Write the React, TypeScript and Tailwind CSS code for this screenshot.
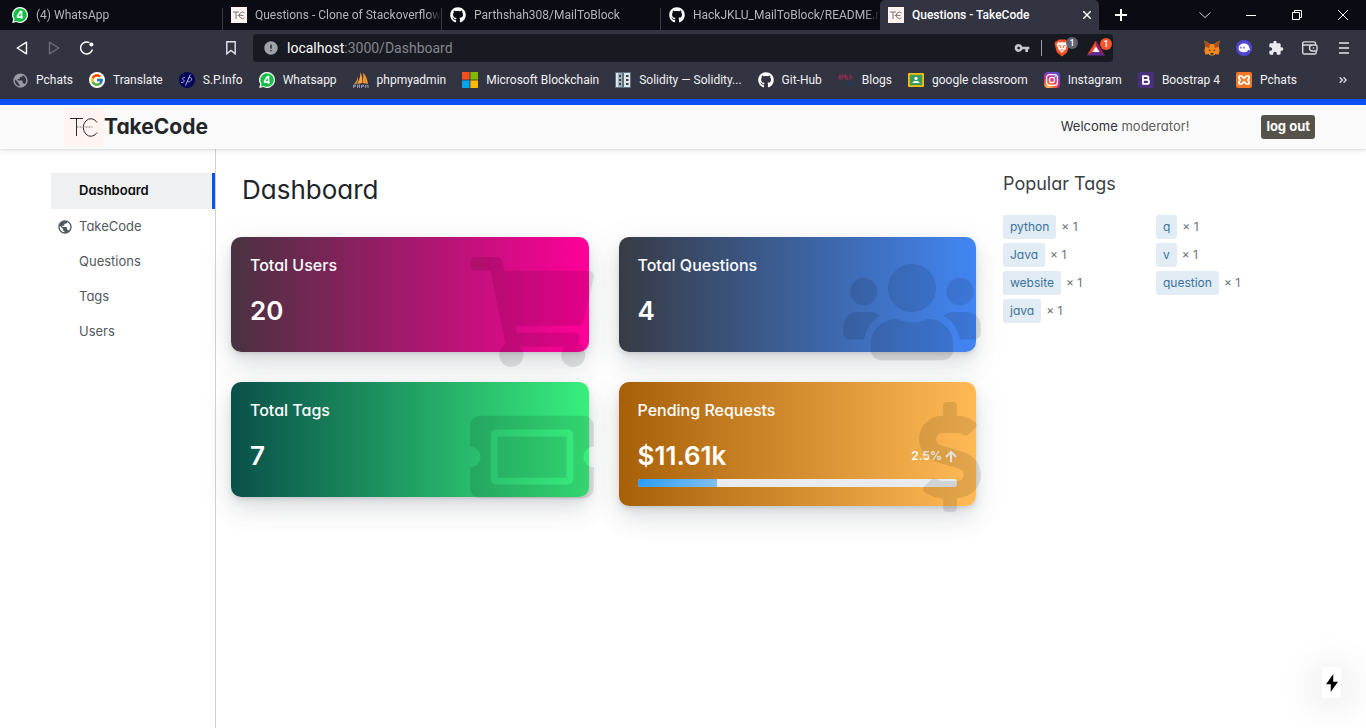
import type { ReactNode } from "react";
import {
  FaArrowUp,
  FaDollarSign,
  FaGithub,
  FaShoppingCart,
  FaTicketAlt,
  FaUsers,
} from "react-icons/fa";
import { FcGoogle } from "react-icons/fc";
import { MdError, MdExtension, MdPublic, MdVpnKey } from "react-icons/md";

/* ---------- Small drawings ---------- */

const TcIcon = () => (
  <span className="grid size-4 shrink-0 place-items-center bg-[#fff4f2]">
    <svg viewBox="0 0 16 16" className="size-4" fill="none" stroke="#777" strokeWidth="1">
      <path d="M2 5h6M5 5v7M13.600 6A3.100 3.300 0 1 0 13.600 10.700M6.500 8.400h6" />
    </svg>
  </span>
);

const WhatsAppIcon = () => (
  <svg viewBox="0 0 16 16" className="size-4 shrink-0">
    <path d="M8 0a8 8 0 1 1-3.700 15.100L.2 16l1-3.900A8 8 0 0 1 8 0z" fill="#fff" />
    <path d="M8 1.200a6.800 6.800 0 1 1-3.400 12.700L1.900 14.500l.7-2.600A6.800 6.800 0 0 1 8 1.200z" fill="#12c143" />
    <path d="M9.500 12V4.600H8.400L5.600 9.100v1h5.200" fill="none" stroke="#fff" strokeWidth="1.600" />
  </svg>
);

const SpIcon = () => (
  <svg viewBox="0 0 16 16" className="size-4 shrink-0">
    <circle cx="8" cy="8" r="8" fill="#04065a" />
    <path
      d="M5.900 5.500C3.500 5 3 7 4.500 8s.5 3-2.500 2.400M6.500 13.500 11.300 2.500M9 6.500c2-2 5-.5 3 2S8.300 9.500 8.500 8.500"
      fill="none"
      stroke="#b9c9f5"
      strokeWidth=".9"
    />
  </svg>
);

const SailIcon = () => (
  <svg viewBox="0 0 16 16" className="size-4 shrink-0">
    <path d="M7.300.3C7.500 4.500 6.500 8 4 12l5-1C9.600 7 9.200 3.500 7.300.3z" fill="#f9a13a" />
    <path d="M10 .8c.4 3.500.2 6.500-.5 10.200l5.500 1C14.500 7.500 13 3.500 10 .8z" fill="#f0922b" />
    <path d="M4.800 4C4.500 7.500 3 10 .8 12.400l2.700-.4C5.300 9.500 5.300 7 4.800 4z" fill="#c98a4a" />
    <path d="M.5 16V13h2v1.500h-2M4.500 12.500V16M4.500 14.200h2V12.500V16M8.500 16v-3h2v1.500h-2M12.500 16v-3l1.200 1.500 1.300-1.500v3" fill="none" stroke="#9498b8" strokeWidth=".9" />
  </svg>
);

const MicrosoftIcon = () => (
  <svg viewBox="0 0 16 16" className="size-4 shrink-0">
    <path d="M0 0h7.600v7.600H0z" fill="#f25022" />
    <path d="M8.400 0H16v7.600H8.400z" fill="#7fba00" />
    <path d="M0 8.400h7.600V16H0z" fill="#00a4ef" />
    <path d="M8.400 8.400H16V16H8.400z" fill="#ffb900" />
  </svg>
);

const SolidityIcon = () => (
  <svg viewBox="0 0 16 16" className="size-4 shrink-0">
    <path d="M0 0h16v16H0z" fill="#5d7282" />
    <path d="M1 1h2.500v14H1zM9 1h6v14H9z" fill="#dfe5e8" />
    <path d="M3.500 1H7v14H3.500z" fill="#a4b1ba" />
    <path d="M4 3h2v2H4zM4 7h2v2H4zM4 11h2v2H4zM11 3h2.500v2H11zM11 7h2.500v2H11zM11 11h2.500v2H11z" fill="#33454f" />
  </svg>
);

const BlogsIcon = () => (
  <svg viewBox="0 0 16 16" className="size-4 shrink-0" fill="none" strokeWidth="1.200">
    <path d="M.5 7.500 2 3l1.300 4.500M1 6h2M4.500 7.500V3L6 5l1.300-2v4.500M8.800 3v4.500h1.700M8.800 5h1.500M12 7.500V3c2.300.5 2.300 4 0 4.500" stroke="#84304f" />
    <path d="M9 13.500V10.500l1 1.500 1-1.500v3M12.500 10.500h2.500v3h-2.500z" stroke="#26395f" />
  </svg>
);

const ClassroomIcon = () => (
  <svg viewBox="0 0 16 16" className="size-4 shrink-0">
    <rect y="1" width="16" height="14" rx="1" fill="#f6bc13" />
    <path d="M1.800 2.800h12.400v10.400H1.800z" fill="#3b9a5c" />
    <circle cx="8" cy="6.400" r="1.600" fill="#fff" />
    <path d="M4.600 11c0-2.600 6.800-2.600 6.800 0z" fill="#fff" />
  </svg>
);

const InstagramIcon = () => (
  <svg viewBox="0 0 16 16" className="size-4 shrink-0">
    <defs>
      <radialGradient id="insta" cx=".25" cy="1.050" r="1.100">
        <stop offset="0" stopColor="#fed65b" />
        <stop offset=".35" stopColor="#f8653c" />
        <stop offset=".65" stopColor="#d02a8c" />
        <stop offset="1" stopColor="#5a4fd6" />
      </radialGradient>
    </defs>
    <rect width="16" height="16" rx="4" fill="url(#insta)" />
    <rect x="2.600" y="2.600" width="10.800" height="10.800" rx="3" fill="none" stroke="#fff" strokeWidth="1.200" />
    <circle cx="8" cy="8" r="2.600" fill="none" stroke="#fff" strokeWidth="1.200" />
    <circle cx="11.200" cy="4.800" r=".7" fill="#fff" />
  </svg>
);

const BootstrapIcon = () => (
  <svg viewBox="0 0 16 16" className="size-4 shrink-0">
    <rect width="16" height="16" rx="2" fill="#4a2f7a" />
    <path
      d="M5 4.200h3.600a1.800 1.800 0 0 1 0 3.700H5h4a2 2 0 0 1 0 4H5z"
      fill="none"
      stroke="#fff"
      strokeWidth="1.800"
    />
  </svg>
);

const XamppIcon = () => (
  <svg viewBox="0 0 16 16" className="size-4 shrink-0">
    <rect width="16" height="16" rx="2" fill="#f37623" />
    <path
      d="M3 4h2.500L8 6.300 10.500 4H13v2.800L11.500 8 13 9.300V12H10.500L8 9.700 5.500 12H3V9.300L4.500 8 3 6.800z"
      fill="none"
      stroke="#fff"
      strokeWidth="1.700"
      strokeLinejoin="round"
    />
  </svg>
);

const GlobeIcon = () => (
  <span className="grid size-4 shrink-0 place-items-center">
    <MdPublic className="size-[17px] text-[#9a9ca4]" />
  </span>
);

const BraveIcon = () => (
  <svg viewBox="0 0 16 18" className="h-[18px] w-4">
    <path d="M4.500.5h7l1.500 1.700 1.500 0L15.500 5l-.6 1.700-1.700 6.600L8 17.500 2.800 13.300 1.100 6.700.5 5l1-2.800 1.500 0z" fill="#fb542b" />
    <path d="M4 3.200 6 3.500l2-.4 2 .4 2-.3 1.500 2.500-1.800 3.100.3 1.300-2.500 1.900L8 14 6.500 12 4 10.100l.3-1.300-1.800-3.100z" fill="#fff" />
    <path d="M4.500 6.300 7 7.300 6.500 9M11.500 6.300 9 7.300 9.500 9M6.800 10.600 8 11.300l1.200-.7" fill="none" stroke="#fb542b" strokeWidth="1" />
  </svg>
);

const BatIcon = () => (
  <svg viewBox="0 0 18 16" className="h-4 w-[18px]">
    <path d="M9 .5 0 15.500 5.600 12 9 6.500z" fill="#ff4724" />
    <path d="M9 .5 18 15.500 12.400 12 9 6.500z" fill="#9e1f63" />
    <path d="M0 15.500h18L12.400 12H5.600z" fill="#662d91" />
    <path d="M9 6.300 12.600 12H5.400z" fill="#fff" />
  </svg>
);

const FoxIcon = () => (
  <svg viewBox="0 0 16 16" className="size-4">
    <path d="M.5.5 6 4h4l5.500-3.500-.7 6.300.9 4.200-1.200 3.800-3.300-.8L9.500 15.500h-3L4.800 14l-3.300.8L.3 11l.9-4.200z" fill="#f6851b" />
    <path d="M.5.5 6 4l-.7 4-4.100-1.200zM15.500.5 10 4l.7 4 4.100-1.200z" fill="#a8511c" />
    <path d="M5.300 9.500 7 10.400l-2.300.6zM10.700 9.500 9 10.400l2.300.6z" fill="#2b3a4c" />
    <path d="M6.500 13h3l.3 1.600H6.200z" fill="#3a2a22" />
    <path d="M4.800 14 6.200 13v1.700zM11.200 14 9.800 13v1.700z" fill="#d8c4b3" />
  </svg>
);

const GhostIcon = () => (
  <svg viewBox="0 0 16 16" className="size-4">
    <circle cx="8" cy="8" r="8" fill="#5145d6" />
    <path d="M2.600 8.500C2.600 5 5.200 3.400 8 3.400s5.400 1.900 5.500 5c.8.800.9 1.700.4 1.900-.5.200-1-.2-1.400-.6-.9 1.700-2.300 2.500-4.500 2.500-3 0-5.400-1.200-5.400-3.700z" fill="#fff" />
    <ellipse cx="5" cy="7.700" rx=".7" ry="1.100" fill="#5145d6" />
    <ellipse cx="8" cy="7.700" rx=".7" ry="1.100" fill="#5145d6" />
  </svg>
);

const WalletIcon = () => (
  <svg viewBox="0 0 16 14" className="h-3.5 w-4" fill="none" stroke="#d9dae0" strokeWidth="1.400">
    <path d="M13.500 4V2.500a1.600 1.600 0 0 0-1.600-1.600H2.300A1.600 1.600 0 0 0 .7 2.500v8.900A1.600 1.600 0 0 0 2.300 13h10.300a1.600 1.600 0 0 0 1.600-1.600V10M1 4h12.700a1.300 1.300 0 0 1 1.300 1.300v3.400A1.300 1.300 0 0 1 13.700 10H10.500a3 3 0 0 1 0-6" />
    <path d="M10.800 7h1.400" />
  </svg>
);

/* ---------- Browser frame ---------- */

type Tab = { title: string; icon: ReactNode; active?: boolean; last?: boolean };

const github = <FaGithub className="size-4 shrink-0 text-white" />;

const tabs: Tab[] = [
  { title: "(4) WhatsApp", icon: <WhatsAppIcon /> },
  { title: "Questions - Clone of Stackoverflow", icon: <TcIcon /> },
  { title: "Parthshah308/MailToBlock", icon: github },
  { title: "HackJKLU_MailToBlock/README.m", icon: github, last: true },
  { title: "Questions - TakeCode", icon: <TcIcon />, active: true },
];

function TabStrip() {
  return (
    <div className="flex h-[30px] bg-[#0b0b14] pl-1">
      <div className="flex min-w-0 grow">
        {tabs.map((tab) =>
          tab.active ? (
            <div
              key={tab.title}
              className="flex w-[219px] items-center gap-2 rounded-t-[5px] bg-[#323442] px-2 text-white"
            >
              {tab.icon}
              <span className="grow truncate font-medium">{tab.title}</span>
              <button type="button" aria-label="Close tab">
                <svg viewBox="0 0 8 8" className="size-2" stroke="#fff" strokeWidth="1.500">
                  <path d="M0 0 8 8M8 0 0 8" />
                </svg>
              </button>
            </div>
          ) : (
            <div key={tab.title} className="flex w-[219px] items-center text-[#b4b5ba]">
              <div className="flex min-w-0 grow items-center gap-2 pl-2">
                {tab.icon}
                <span className="grow overflow-hidden whitespace-nowrap [mask-image:linear-gradient(to_right,#000_92%,transparent)]">
                  {tab.title}
                </span>
              </div>
              {!tab.last && <span className="mt-2 h-[22px] w-px bg-[#3b3b44]" />}
            </div>
          ),
        )}
        <button type="button" aria-label="New tab" className="grid w-11 place-items-center">
          <svg viewBox="0 0 12 12" className="size-3" stroke="#fff" strokeWidth="2">
            <path d="M6 0v12M0 6h12" />
          </svg>
        </button>
      </div>
      <div className="flex">
        <button type="button" aria-label="Search tabs" className="grid w-[46px] place-items-center">
          <svg viewBox="0 0 12 6" className="h-1.5 w-3" fill="none" stroke="#d5d5d8">
            <path d="M.5.5 6 5.500 11.500.5" />
          </svg>
        </button>
        <button type="button" aria-label="Minimize" className="grid w-[46px] place-items-center">
          <span className="h-px w-2.5 bg-white" />
        </button>
        <button type="button" aria-label="Restore" className="grid w-[46px] place-items-center">
          <svg viewBox="0 0 10 10" className="size-2.5" fill="none" stroke="#fff">
            <path d="M.5 2.500h7v7h-7zM2.500 2V.5h7v7H8" />
          </svg>
        </button>
        <button type="button" aria-label="Close" className="grid w-[46px] place-items-center">
          <svg viewBox="0 0 10 10" className="size-2.5" stroke="#fff">
            <path d="M0 0 10 10M10 0 0 10" />
          </svg>
        </button>
      </div>
    </div>
  );
}

function Toolbar() {
  return (
    <div className="flex h-9 items-center pr-3 pl-4">
      <div className="flex w-[237px] items-center gap-5 pr-[17px]">
        <button type="button" aria-label="Back">
          <svg viewBox="0 0 12 14" className="h-3.5 w-3" fill="none" stroke="#fff" strokeWidth="1.400" strokeLinejoin="round">
            <path d="M10.500 1.200v11.600L1.200 7z" />
          </svg>
        </button>
        <button type="button" aria-label="Forward">
          <svg viewBox="0 0 12 14" className="h-3.5 w-3" fill="none" stroke="#6a6c78" strokeWidth="1.400" strokeLinejoin="round">
            <path d="M1.500 1.200v11.600L10.800 7z" />
          </svg>
        </button>
        <button type="button" aria-label="Reload">
          <svg viewBox="0 0 14 14" className="size-3.5" fill="none" stroke="#fff" strokeWidth="1.500">
            <path d="M9.500 1.700A6 6 0 1 0 12.400 8.500" />
            <circle cx="11.400" cy="3.400" r="2" fill="#fff" stroke="none" />
          </svg>
        </button>
        <button type="button" aria-label="Bookmark" className="ml-auto">
          <svg viewBox="0 0 10 14" className="h-3.5 w-2.5" fill="none" stroke="#e4e5ea" strokeWidth="1.400">
            <path d="M.8.8h8.400v12L5 9.500.8 12.800z" />
          </svg>
        </button>
      </div>
      <div className="flex h-7 grow items-center rounded bg-[#171a21] pr-0.5 pl-2.5">
        <MdError className="size-4 text-[#a0a2aa]" />
        <div role="textbox" aria-label="Address" tabIndex={0} className="grow pl-2 text-sm text-[#85878e]">
          <span className="text-white">localhost</span>:3000/Dashboard
        </div>
        <MdVpnKey className="size-4 text-[#c5c6cc]" />
        <span className="mr-3 ml-[11px] h-4 w-px bg-[#9a9ca4]" />
        <span className="relative mr-[17px]">
          <BraveIcon />
          <span className="absolute -top-0.5 left-3 grid size-3 place-items-center rounded-full bg-[#5f6270] text-[9px] leading-3 font-medium text-white">
            1
          </span>
        </span>
        <span className="relative mr-1.5">
          <BatIcon />
          <span className="absolute -top-0.5 left-[13px] grid size-3 place-items-center rounded-full bg-[#fb542b] text-[9px] leading-3 font-medium text-white">
            1
          </span>
        </span>
      </div>
      <div className="ml-[91px] flex items-center gap-4">
        <FoxIcon />
        <GhostIcon />
        <MdExtension className="size-4 text-[#e9eaee]" />
        <span className="pl-0.5">
          <WalletIcon />
        </span>
        <button type="button" aria-label="Menu" className="flex w-5 flex-col items-center gap-[3px]">
          <span className="h-[2px] w-2.5 bg-[#b9bac2]" />
          <span className="h-[2px] w-2.5 bg-[#b9bac2]" />
          <span className="h-[2px] w-2.5 bg-[#b9bac2]" />
        </button>
      </div>
    </div>
  );
}

const bookmarks: { label: string; icon: ReactNode }[] = [
  { label: "Pchats", icon: <GlobeIcon /> },
  {
    label: "Translate",
    icon: (
      <span className="grid size-4 shrink-0 place-items-center rounded-full bg-white">
        <FcGoogle className="size-3.5" />
      </span>
    ),
  },
  { label: "S.P.Info", icon: <SpIcon /> },
  { label: "Whatsapp", icon: <WhatsAppIcon /> },
  { label: "phpmyadmin", icon: <SailIcon /> },
  { label: "Microsoft Blockchain", icon: <MicrosoftIcon /> },
  { label: "Solidity — Solidity...", icon: <SolidityIcon /> },
  { label: "Git-Hub", icon: github },
  { label: "Blogs", icon: <BlogsIcon /> },
  { label: "google classroom", icon: <ClassroomIcon /> },
  { label: "Instagram", icon: <InstagramIcon /> },
  { label: "Boostrap 4", icon: <BootstrapIcon /> },
  { label: "Pchats", icon: <XamppIcon /> },
];

function BookmarksBar() {
  return (
    <nav aria-label="Bookmarks" className="flex h-[33px] items-center pb-1.5 pl-3 text-[#f1f1f4]">
      <ul className="flex grow items-center gap-4">
        {bookmarks.map((item, i) => (
          <li key={i}>
            <a href="#" className="flex items-center gap-2 whitespace-nowrap">
              {item.icon}
              {item.label}
            </a>
          </li>
        ))}
      </ul>
      <button type="button" aria-label="More bookmarks" className="mr-[19px]">
        <svg viewBox="0 0 8 6" className="h-1.5 w-2" fill="none" stroke="#e4e5ea" strokeWidth="1.300">
          <path d="M.7.3 3.400 3 .7 5.700M4.500.3 7.200 3 4.500 5.700" />
        </svg>
      </button>
    </nav>
  );
}

/* ---------- Site ---------- */

function SiteHeader() {
  return (
    <header className="z-10 border-t-[6px] border-[#0a52f0] bg-[#fafafa] shadow-[0_1px_2px_rgba(0,0,0,0.1),0_2px_8px_rgba(0,0,0,0.07)]">
      <div className="mx-auto flex h-11 max-w-[1264px] items-center justify-between">
        <a href="#" className="flex items-center pl-[13px] text-[21px] font-bold text-[#232629]">
          <svg viewBox="0 0 40 40" className="size-10 bg-[#fff4f2]" fill="none" stroke="#2b2b2b" strokeWidth="1">
            <path d="M6 11.500h13M12.500 11.500V29M33 15.500a7.500 8.800 0 1 0 0 10" />
            <path d="M12.500 20h16" strokeDasharray="2 1" stroke="#777" />
          </svg>
          TakeCode
        </a>
        <div className="flex items-center gap-[72px]">
          <p className="text-[13px] text-[#2f3337]">
            Welcome <span className="text-[#5e5e5a]">moderator!</span>
          </p>
          <button type="button" className="h-6 rounded-[3px] bg-[#54524a] px-[5px] text-[13px] font-bold text-white">
            log out
          </button>
        </div>
      </div>
    </header>
  );
}

const links = ["TakeCode", "Questions", "Tags", "Users"];

function Sidebar() {
  return (
    <nav aria-label="Main" className="w-[165px] shrink-0 border-r border-[#d0d3d6] pt-6 text-[13px] text-[#525960]">
      <a
        href="#"
        aria-current="page"
        className="flex h-9 items-center border-r-[3px] border-[#0a52f0] bg-[#eff0f1] pl-7 font-semibold text-[#0c0d0e]"
      >
        Dashboard
      </a>
      {links.map((label, i) => (
        <a key={label} href="#" className="flex h-[35px] items-center gap-1.5 pl-1.5">
          <span className="size-4">{i === 0 && <MdPublic className="size-4" />}</span>
          {label}
        </a>
      ))}
    </nav>
  );
}

type CardProps = { title: string; value: string; background: string; icon: ReactNode; children?: ReactNode };

function StatCard({ title, value, background, icon, children }: CardProps) {
  return (
    <section
      className={`relative rounded-[10px] px-[19px] pt-[18px] text-white shadow-[0_7px_35px_rgba(90,97,105,0.1),0_15px_22px_rgba(90,97,105,0.1),0_4px_8px_rgba(90,97,105,0.12),0_2px_3px_rgba(90,97,105,0.1)] ${background}`}
    >
      <h2 className="mb-5 text-base leading-5 font-medium">{title}</h2>
      <p className="text-[26px] leading-8 font-semibold">{value}</p>
      {children}
      <span className="absolute top-5 -right-[5px] text-black opacity-10">{icon}</span>
    </section>
  );
}

function Dashboard() {
  return (
    <main className="min-w-0 grow px-[15px] pt-[25px] pb-8">
      <h1 className="mb-[31px] pl-[11px] text-[26px] leading-8 text-[#212529]">Dashboard</h1>
      <div className="grid grid-cols-2 items-start gap-[30px]">
        <StatCard
          title="Total Users"
          value="20"
          background="bg-[linear-gradient(to_right,#493240,#f09)] pb-[25px]"
          icon={<FaShoppingCart className="h-[110px] w-[124px]" />}
        />
        <StatCard
          title="Total Questions"
          value="4"
          background="bg-[linear-gradient(to_right,#373b44,#4286f4)] pb-[25px]"
          icon={<FaUsers className="h-[110px] w-[138px]" />}
        />
        <StatCard
          title="Total Tags"
          value="7"
          background="bg-[linear-gradient(to_right,#0a504a,#38ef7d)] pb-[25px]"
          icon={<FaTicketAlt className="h-[110px] w-[124px]" />}
        />
        <StatCard
          title="Pending Requests"
          value="$11.61k"
          background="bg-[linear-gradient(to_right,#a86008,#ffba56)] pb-[19px]"
          icon={<FaDollarSign className="h-[110px] w-[62px]" />}
        >
          <p className="-mt-8 flex h-8 items-center justify-end gap-[3px] text-xs font-semibold">
            2.5% <FaArrowUp className="h-[13px] w-3" />
          </p>
          <div className="mt-[7px] h-2 overflow-hidden rounded-[3px] bg-[#e9ecef]">
            <div className="h-full w-1/4 bg-[linear-gradient(135deg,#289cf5,#84c0ec)]" />
          </div>
        </StatCard>
      </div>
    </main>
  );
}

const tags = ["python", "q", "Java", "v", "website", "question", "java"];

function PopularTags() {
  return (
    <aside className="w-[324px] shrink-0 pt-[23px] pr-1.5 pl-3">
      <h2 className="mb-[19px] text-lg leading-6 text-[#3b4045]">Popular Tags</h2>
      <ul className="grid grid-cols-2 gap-y-1 text-xs text-[#6a737c]">
        {tags.map((tag) => (
          <li key={tag} className="flex h-6 items-center gap-[5px]">
            <a href="#" className="rounded-[3px] bg-[#e1ecf4] px-[7px] leading-6 text-[#39739d]">
              {tag}
            </a>
            × 1
          </li>
        ))}
      </ul>
    </aside>
  );
}

export default function App() {
  return (
    <div className="flex min-h-screen flex-col bg-white">
      <div className="bg-[#323442] font-['Roboto',sans-serif] text-xs">
        <TabStrip />
        <Toolbar />
        <BookmarksBar />
      </div>
      <div className="flex grow flex-col font-['Inter',sans-serif] [font-feature-settings:'cv11']">
        <SiteHeader />
        <div className="mx-auto flex w-full max-w-[1264px] grow">
          <Sidebar />
          <Dashboard />
          <PopularTags />
        </div>
      </div>
      <button
        type="button"
        aria-label="Quick actions"
        className="fixed right-[25px] bottom-[30px] grid h-[31px] w-[19px] place-items-center rounded-[3px] bg-white shadow-[0_4px_40px_rgba(0,0,0,0.22)]"
      >
        <svg viewBox="0 0 12 18" className="h-[18px] w-3">
          <path d="M7.300 0 0 10.300h4.800L4.700 18 12 7.700H7.200z" fill="#000" />
        </svg>
      </button>
    </div>
  );
}
